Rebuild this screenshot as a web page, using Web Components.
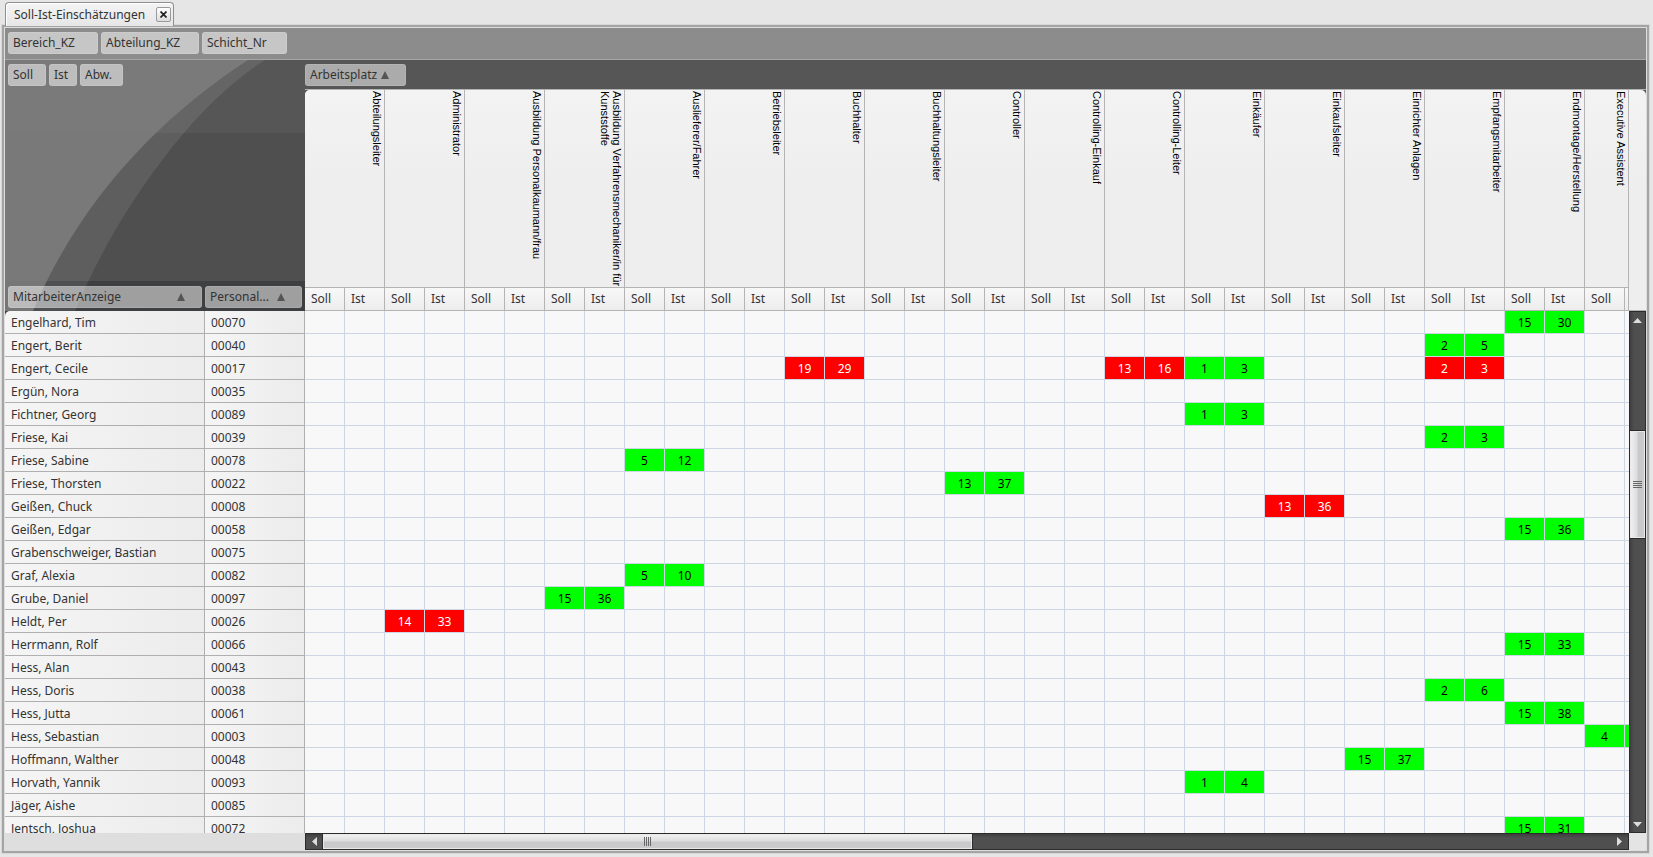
<!DOCTYPE html>
<html lang="de">
<head>
<meta charset="utf-8">
<title>Soll-Ist-Einschätzungen</title>
<style>
html, body { margin: 0; height: 100%; }
body {
  background: #e6e6e6;
  color: #333;
  font: 12px/16px "Noto Sans", "DejaVu Sans Condensed", sans-serif;
  overflow: hidden;
}
</style>
</head>
<body>
<pivot-page></pivot-page>

<script>
const JOBS = ["Abteilungsleiter", "Administrator", "Ausbildung Personalkaumann/frau",
  "Ausbildung Verfahrensmechaniker/in für Kunststoffe", "Auslieferer/Fahrer", "Betriebsleiter",
  "Buchhalter", "Buchhaltungsleiter", "Controller", "Controlling-Einkauf", "Controlling-Leiter",
  "Einkäufer", "Einkaufsleiter", "Einrichter Anlagen", "Empfangsmitarbeiter",
  "Endmontage/Herstellung", "Executive Assistent"];

// name, number, then [job index, soll, ist, state]
const STAFF = [
  ["Engelhard, Tim", "00070", [15, 15, 30, "ok"]],
  ["Engert, Berit", "00040", [14, 2, 5, "ok"]],
  ["Engert, Cecile", "00017", [6, 19, 29, "bad"], [10, 13, 16, "bad"], [11, 1, 3, "ok"], [14, 2, 3, "bad"]],
  ["Ergün, Nora", "00035"],
  ["Fichtner, Georg", "00089", [11, 1, 3, "ok"]],
  ["Friese, Kai", "00039", [14, 2, 3, "ok"]],
  ["Friese, Sabine", "00078", [4, 5, 12, "ok"]],
  ["Friese, Thorsten", "00022", [8, 13, 37, "ok"]],
  ["Geißen, Chuck", "00008", [12, 13, 36, "bad"]],
  ["Geißen, Edgar", "00058", [15, 15, 36, "ok"]],
  ["Grabenschweiger, Bastian", "00075"],
  ["Graf, Alexia", "00082", [4, 5, 10, "ok"]],
  ["Grube, Daniel", "00097", [3, 15, 36, "ok"]],
  ["Heldt, Per", "00026", [1, 14, 33, "bad"]],
  ["Herrmann, Rolf", "00066", [15, 15, 33, "ok"]],
  ["Hess, Alan", "00043"],
  ["Hess, Doris", "00038", [14, 2, 6, "ok"]],
  ["Hess, Jutta", "00061", [15, 15, 38, "ok"]],
  ["Hess, Sebastian", "00003", [16, 4, "", "ok"]],
  ["Hoffmann, Walther", "00048", [13, 15, 37, "ok"]],
  ["Horvath, Yannik", "00093", [11, 1, 4, "ok"]],
  ["Jäger, Aishe", "00085"],
  ["Jentsch, Joshua", "00072", [15, 15, 31, "ok"]],
];

// the last column takes whatever width is left in the viewport
const COLS = "<colgroup>" + "<col class='c'>".repeat(JOBS.length * 2 - 1) + "<col></colgroup>";

const TABLE_CSS = `
  * { box-sizing: border-box; }
  table { border-collapse: separate; border-spacing: 0; table-layout: fixed; width: 100%; }
  .c { width: 40px; }
  th, td { padding: 0; font-weight: normal; overflow: hidden; white-space: nowrap; }`;

function define(name, render) {
  customElements.define(name, class extends HTMLElement {
    connectedCallback() {
      if (!this.shadowRoot) this.attachShadow({ mode: "open" }).innerHTML = render(this);
    }
  });
}

define("page-tab", () => `
<style>
  :host { display: flex; align-items: center; justify-content: space-between; box-sizing: border-box;
    width: 169px; height: 24px; padding: 0 2px 0 8px;
    border: 1px solid #8f8f8f; border-bottom: 0; border-radius: 4px 4px 0 0;
    background: linear-gradient(#f4f4f4, #e6e6e6); box-shadow: inset 1px 1px #fff; }
  button { display: grid; place-items: center; width: 15px; height: 15px; padding: 0;
    border: 1px solid #9a9a9a; border-radius: 2px; background: linear-gradient(#fff, #ddd); }
</style>
<slot></slot>
<button aria-label="Schließen"><svg width="7" height="7" viewBox="0 0 7 7"><path d="M.5.5l6 6M6.5.5l-6 6" stroke="#222" stroke-width="1.7"/></svg></button>`);

define("field-chip", el => `
<style>
  :host { display: block; flex: none; }
  button { display: flex; align-items: center; justify-content: space-between; box-sizing: border-box;
    width: 100%; height: 22px; padding: 0 16px 0 4px; overflow: hidden; white-space: nowrap;
    font: inherit; color: #333; border: 1px solid rgba(255,255,255,.12); border-radius: 3px;
    background: rgba(255,255,255,.5); }
  :host(:not([sorted])) button { padding-right: 0; }
</style>
<button><slot></slot>${el.hasAttribute("sorted") ? `<svg width="8" height="8" viewBox="0 0 8 8"><path d="M4 0l4 8H0z" fill="#555"/></svg>` : ""}</button>`);

define("pivot-corner", () => `
<style>
  :host { display: grid; overflow: hidden; }
  svg, .fields { grid-area: 1 / 1; }
  .fields { display: flex; flex-direction: column; justify-content: space-between; padding: 4px 3px 3px; z-index: 1; }
  .row { display: flex; gap: 3px; }
</style>
<svg width="300" height="251" viewBox="0 0 300 251" aria-hidden="true">
  <path fill="#565656" d="M0 0h300v73H0z"/>
  <path fill="#4f4f4f" d="M0 73h300v148H0z"/>
  <path fill="#3e3f41" d="M0 221h300v30H0z"/>
  <path fill="#fff" fill-opacity=".09" d="M0 0H260C188 45 112 150 70 251H0z"/>
  <path fill="#7f7f7f" fill-opacity=".8" d="M0 0H243C155 57 75 140 28 251H0z"/>
</svg>
<div class="fields">
  <div class="row"><slot name="data"></slot></div>
  <div class="row"><slot name="rows"></slot></div>
</div>`);

define("pivot-columns", () => `
<style>${TABLE_CSS}
  :host { display: grid; grid-template-columns: 1fr 17px; border-top: 1px solid #b4b4b4;
    background: #565656; }
  table { background: #efefef; border-top-left-radius: 5px; }
  th { border-right: 1px solid #b4b4b4; border-bottom: 1px solid #b4b4b4; }
  .job { height: 198px; vertical-align: top;
    background: linear-gradient(#f3f3f3, #eee 45%); }
  .job:first-child { border-top-left-radius: 5px; }
  .job span { display: block; writing-mode: vertical-rl; text-align: left; white-space: normal;
    width: 100%; height: 197px; padding: 1px 1px 0 0; color: #000;
    font: 11px/12px "Liberation Sans", Arial, sans-serif; }
  .sub { height: 23px; padding: 0 0 0 6px; text-align: left; background: linear-gradient(#f8f8f8, #ededed); }
  .sub:last-child { padding: 0; }
  .end { border-bottom: 1px solid #b4b4b4; border-top-right-radius: 5px; background: linear-gradient(#f3f3f3, #eee 45%); }
</style>
<table>${COLS}<thead>
  <tr>${JOBS.map(j => `<th class="job" colspan="2" scope="colgroup"><span>${j}</span></th>`).join("")}</tr>
  <tr>${JOBS.map((j, i) => `<th class="sub" scope="col">Soll</th><th class="sub" scope="col">${i < JOBS.length - 1 ? "Ist" : ""}</th>`).join("")}</tr>
</thead></table>
<div class="end"></div>`);

define("pivot-rows", () => `
<style>${TABLE_CSS}
  :host { display: block; overflow: hidden; background: #3e3f41; }
  table { border-top-left-radius: 5px; overflow: hidden; }
  th { height: 23px; padding: 1px 0 0 6px; text-align: left; border-right: 1px solid #b0b0b0;
    border-bottom: 1px solid #b0b0b0; background: linear-gradient(90deg, #f5f5f5, #ececec); }
  .name { width: 200px; }
</style>
<table><colgroup><col class="name"><col></colgroup><tbody>
${STAFF.map(s => `<tr><th scope="row">${s[0]}</th><th scope="row">${s[1]}</th></tr>`).join("")}
</tbody></table>`);

define("pivot-data", () => `
<style>${TABLE_CSS}
  :host { display: block; overflow: hidden; background: #f8f8f8; }
  td { height: 23px; padding-top: 1px; text-align: center; border-right: 1px solid #ced6e6; border-bottom: 1px solid #ced6e6; }
  td:last-child { border-right: 0; }
  .ok { background: #0f0; color: #000; background-clip: padding-box; }
  .bad { background: #f00; color: #fff; background-clip: padding-box; }
</style>
<table>${COLS}<tbody>
${STAFF.map(([, , ...marks]) => `<tr>${JOBS.map((j, i) => {
  const m = marks.find(x => x[0] === i);
  return m ? `<td class="${m[3]}">${m[1]}</td><td class="${m[3]}">${m[2]}</td>` : "<td></td><td></td>";
}).join("")}</tr>`).join("")}
</tbody></table>`);

define("scroll-track", el => {
  const v = el.hasAttribute("vertical");
  const arrow = back => v
    ? `<svg width="9" height="5" viewBox="0 0 9 5"><path d="${back ? "M4.5 0L9 5H0z" : "M0 0h9L4.5 5z"}" fill="#ddd"/></svg>`
    : `<svg width="5" height="9" viewBox="0 0 5 9"><path d="${back ? "M5 0v9L0 4.5z" : "M0 0l5 4.5L0 9z"}" fill="#ddd"/></svg>`;
  return `
<style>
  :host { display: flex; flex-direction: ${v ? "column" : "row"}; box-sizing: border-box; border: 1px solid #2b2b2d;
    background: linear-gradient(${v ? "90deg" : "180deg"}, #3f3f41, #4f4f4f 4px); }
  button { display: grid; place-items: center; flex: none; width: ${v ? "auto" : "17px"}; height: ${v ? "16px" : "auto"};
    padding: 0; border: 0; background: none; }
  .before { flex: var(--before) 0 0; }
  .after { flex: var(--after) 0 0; }
  .thumb { flex: var(--thumb) 0 0; display: grid; place-items: center; outline: 1px solid #2b2b2d;
    background: linear-gradient(${v ? "90deg" : "180deg"}, #f2f2f2, #dedede 45%, #c9c9cb 55%, #cbcbcd); box-shadow: inset 0 0 0 1px #e9e9e9; }
</style>
<button aria-label="Zurück">${arrow(true)}</button>
<div class="before"></div>
<div class="thumb"><svg width="9" height="9" viewBox="0 0 9 9" shape-rendering="crispEdges"><path d="${v ? "M0 1.5h9M0 3.5h9M0 5.5h9M0 7.5h9" : "M1.5 0v9M3.5 0v9M5.5 0v9M7.5 0v9"}" stroke="#666"/></svg></div>
<div class="after"></div>
<button aria-label="Weiter">${arrow(false)}</button>`;
});

define("pivot-page", () => `
<style>
  :host { display: flex; flex-direction: column; box-sizing: border-box; height: 100vh; padding: 2px 4px 4px 2px; }
  page-tab { margin: 0 0 -1px 3px; z-index: 1; }
  main { flex: 1; min-height: 0; display: grid; grid-template: 32px 29px 222px 1fr 17px / 300px 1fr 17px;
    border: 2px solid #a4a4a4; outline: 1px solid #d8d8d8; padding: 1px;
    background: #dedede; }
  .filters { grid-column: 1 / -1; display: flex; gap: 3px; padding: 4px 3px;
    background: #8c8c8c; border-bottom: 1px solid #a6a6a6; box-sizing: border-box; }
  pivot-corner { grid-area: 2 / 1 / 4 / 2; }
  .columns { grid-area: 2 / 2 / 3 / 4; padding-top: 4px; background: #565656; }
  pivot-columns { grid-area: 3 / 2 / 4 / 4; }
  .corner { grid-area: 5 / 3; background: #e4e4e4; }
  .h { grid-area: 5 / 2; --before: 0; --thumb: 650; --after: 640; }
  .v { grid-area: 4 / 3; --before: 103; --thumb: 107; --after: 279; }
  .w28 { width: 28px; } .w38 { width: 38px; } .w43 { width: 43px; } .w85 { width: 85px; }
  .w90 { width: 90px; } .w97 { width: 97px; } .w98 { width: 98px; } .w101 { width: 101px; } .w194 { width: 194px; }
</style>
<page-tab>Soll-Ist-Einschätzungen</page-tab>
<main>
  <div class="filters">
    <field-chip class="w90">Bereich_KZ</field-chip>
    <field-chip class="w98">Abteilung_KZ</field-chip>
    <field-chip class="w85">Schicht_Nr</field-chip>
  </div>
  <pivot-corner>
    <field-chip slot="data" class="w38">Soll</field-chip>
    <field-chip slot="data" class="w28">Ist</field-chip>
    <field-chip slot="data" class="w43">Abw.</field-chip>
    <field-chip slot="rows" class="w194" sorted>MitarbeiterAnzeige</field-chip>
    <field-chip slot="rows" class="w97" sorted>Personal...</field-chip>
  </pivot-corner>
  <div class="columns"><field-chip class="w101" sorted>Arbeitsplatz</field-chip></div>
  <pivot-columns></pivot-columns>
  <pivot-rows></pivot-rows>
  <pivot-data></pivot-data>
  <scroll-track class="v" vertical></scroll-track>
  <scroll-track class="h"></scroll-track>
  <div class="corner"></div>
</main>`);
</script>
</body>
</html>
